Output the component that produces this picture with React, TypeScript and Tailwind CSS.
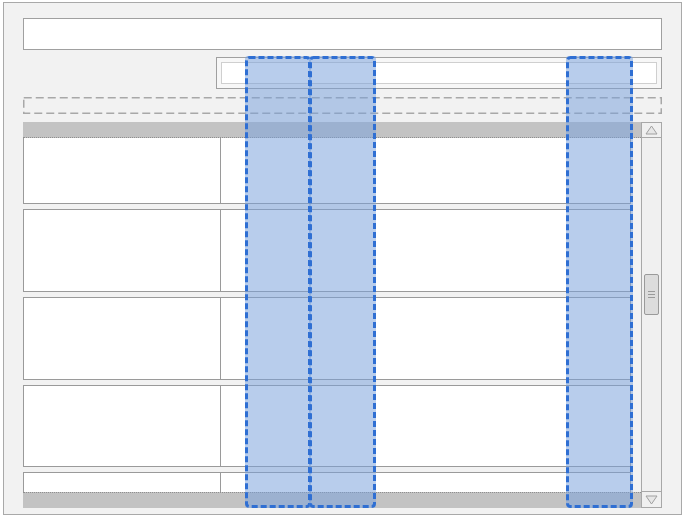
import React from 'react';

const rows = [66, 83, 83, 82, 40];

const DashedFrame = ({ color, width, dash, radius }: { color: string; width: number; dash: string; radius: number }) => (
  <svg className="absolute inset-0 w-full h-full overflow-visible pointer-events-none">
    <rect
      x={width / 2}
      y={width / 2}
      width={`calc(100% - ${width}px)`}
      height={`calc(100% - ${width}px)`}
      rx={radius}
      fill="none"
      stroke={color}
      strokeWidth={width}
      strokeDasharray={dash}
    />
  </svg>
);

const App = () => {
  const overlays = [
    { left: 'left-[245px]', width: 'w-[66px]' },
    { left: 'left-[309px]', width: 'w-[67px]' },
    { left: 'left-[566px]', width: 'w-[67px]' },
  ];

  return (
    <div className="relative w-[684px] h-[516px] bg-white overflow-hidden">
      <div className="ml-[3px] mt-[2px] w-[679px] h-[513px] border border-[#a9a9a9] bg-[#f2f2f2] pl-[19px] pt-[15px] flex flex-col">
        {/* search field */}
        <div className="w-[639px] h-[32px] border border-[#a0a0a0] bg-white" />

        {/* filter field */}
        <div className="mt-[7px] ml-[193px] w-[446px] h-[32px] border border-[#a0a0a0] bg-[#f7f7f7] p-[4px]">
          <div className="h-full border border-[#cfcfcf] bg-white" />
        </div>

        {/* drop zone */}
        <div className="relative mt-[8px] w-[639px] h-[17px]">
          <DashedFrame color="#a8a8a8" width={1.5} dash="8 4" radius={0} />
        </div>

        {/* grid */}
        <div className="mt-[8px] w-[639px] h-[386px] flex">
          <div className="w-[618px] h-full flex flex-col">
            <div className="h-[16px] bg-[#c3c3c3] border-b border-dotted border-[#8f8f8f]" />
            <div className="flex-1 min-h-0 overflow-hidden pr-[10px] flex flex-col gap-[5px]">
              {rows.map((h, i) => (
                <div
                  key={i}
                  className={`shrink-0 flex bg-white border-x border-b border-[#9a9a9a] ${i === 0 ? '' : 'border-t'}`}
                  style={{ height: h }}
                >
                  <div className="w-[197px] border-r border-[#9a9a9a]" />
                  <div className="flex-1" />
                </div>
              ))}
            </div>
            <div className="h-[16px] bg-[#c3c3c3] border-t border-dotted border-[#8f8f8f]" />
          </div>

          {/* scrollbar */}
          <div className="w-[21px] h-full border border-[#a8a8a8] bg-[#f0f0f0] flex flex-col">
            <div className="h-[15px] border-b border-[#a8a8a8] flex items-center justify-center">
              <svg width="13" height="10" viewBox="0 0 13 10">
                <path d="M6.5 1 L12 9 L1 9 Z" fill="#e6e6e6" stroke="#a0a0a0" strokeWidth="1" />
              </svg>
            </div>
            <div className="flex-1 relative">
              <div className="absolute left-[2px] top-[136px] w-[15px] h-[41px] bg-[#dcdcdc] border border-[#9a9a9a] rounded-[2px] flex flex-col items-center justify-center gap-[2px]">
                <div className="w-[7px] h-px bg-[#9a9a9a]" />
                <div className="w-[7px] h-px bg-[#9a9a9a]" />
                <div className="w-[7px] h-px bg-[#9a9a9a]" />
              </div>
            </div>
            <div className="h-[16px] border-t border-[#a8a8a8] flex items-center justify-center">
              <svg width="13" height="10" viewBox="0 0 13 10">
                <path d="M1 1 L12 1 L6.5 9 Z" fill="#e6e6e6" stroke="#a0a0a0" strokeWidth="1" />
              </svg>
            </div>
          </div>
        </div>
      </div>

      {/* selected columns */}
      {overlays.map((o, i) => (
        <div
          key={i}
          className={`absolute top-[56px] h-[452px] ${o.left} ${o.width} bg-[rgba(120,161,219,0.53)] rounded-[3px]`}
        >
          <DashedFrame color="#2f6fd3" width={3} dash="6 3" radius={3} />
        </div>
      ))}
    </div>
  );
};

export default App;
